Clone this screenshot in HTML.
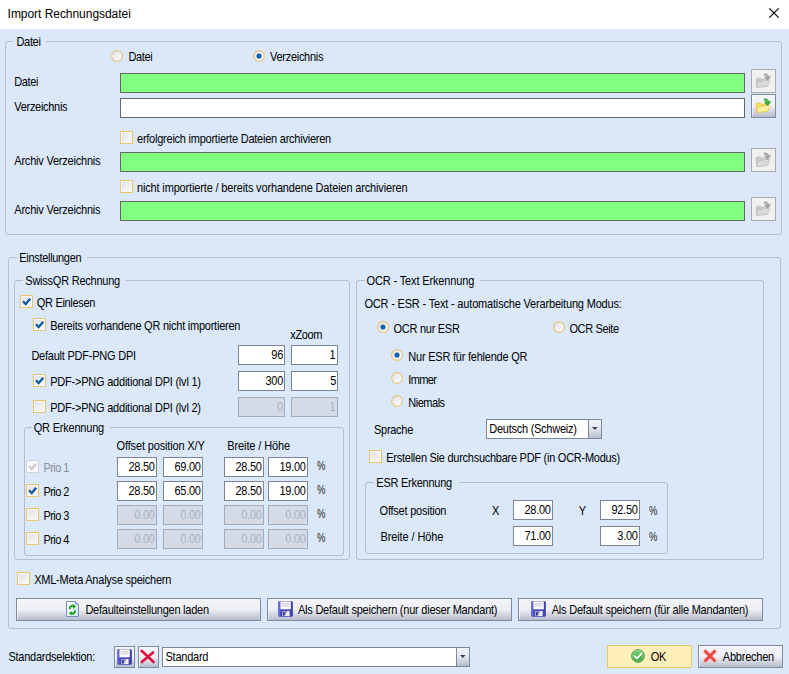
<!DOCTYPE html>
<html><head><meta charset="utf-8"><title>Import Rechnungsdatei</title>
<style>
*{box-sizing:border-box;margin:0;padding:0}
html,body{width:789px;height:674px;overflow:hidden;background:#fff}
body{position:relative;font-family:"Liberation Sans",sans-serif;font-size:11px;color:#000}
.a{position:absolute}
#bg{left:0;top:29px;width:789px;height:645px;background:#dae8fa}
.t{position:absolute;white-space:nowrap;line-height:14px;transform:scaleY(1.13);transform-origin:0 11px}
.gb{position:absolute;border:1px solid #b9bec6;border-radius:3px}
.gl{position:absolute;background:#dae8fa;height:4px}
.in{position:absolute;height:20px;background:#fff;border:1px solid #666}
.n{border-color:#7b8597}
.g{background:#80ff80}
.dis{background:#d5dbe6;border-color:#a4abb9}
.cb{position:absolute;width:13px;height:13px;border:1px solid #e9c56c;background:linear-gradient(135deg,#dfe0e5,#eeeef1 50%,#f9f9fb);box-shadow:inset 0 0 0 1px rgba(246,248,253,.9)}
.cb.gr{border-color:#d2d2d2;background:#fbfbfb}
.btn{position:absolute;border:1px solid #7f8a9f;border-radius:0;background:linear-gradient(#f3f4f8 0%,#edeff4 50%,#b6bdcc 100%);box-shadow:inset 1px 1px 0 rgba(255,255,255,.5)}
.bd{position:absolute;border:1px solid #adaaa7;background:#f0f0f0}
</style></head><body>
<div class="a" id="bg"></div>
<svg class="a" width="0" height="0"><defs><linearGradient id="rg" x1="0" y1="0" x2="1" y2="1"><stop offset="0" stop-color="#d9dae0"/><stop offset="0.5" stop-color="#f0f0f3"/><stop offset="1" stop-color="#ffffff"/></linearGradient></defs></svg>
<svg class="a" style="left:768px;top:7px" width="12" height="12" viewBox="0 0 12 12"><path d="M1.3 1.3 L10.7 10.7 M10.7 1.3 L1.3 10.7" stroke="#000" stroke-width="1.15" fill="none"/></svg>
<div class="gb" style="left:5px;top:41px;width:777px;height:194px"></div>
<div class="gl" style="left:13px;top:40px;width:33px"></div>
<svg class="a" style="left:111px;top:49.5px" width="12" height="12" viewBox="0 0 12 12"><circle cx="6" cy="6" r="5.4" fill="url(#rg)" stroke="#e8c67c" stroke-width="1.2"/></svg>
<svg class="a" style="left:253px;top:49.5px" width="12" height="12" viewBox="0 0 12 12"><circle cx="6" cy="6" r="5.4" fill="url(#rg)" stroke="#e8c67c" stroke-width="1.2"/><circle cx="6" cy="6" r="2.55" fill="#1060b0"/></svg>
<div class="in g" style="left:120px;top:73px;width:625px"></div>
<div class="in " style="left:120px;top:98px;width:625px"></div>
<div class="cb" style="left:120px;top:131px"></div>
<div class="in g" style="left:120px;top:152px;width:625px"></div>
<div class="cb" style="left:120px;top:180px"></div>
<div class="in g" style="left:120px;top:201px;width:625px"></div>
<div class="bd" style="left:751px;top:69px;width:25px;height:24px"></div>
<div class="btn" style="left:751px;top:94px;width:25px;height:24px;border-radius:0"></div>
<div class="bd" style="left:751px;top:148px;width:25px;height:24px"></div>
<div class="bd" style="left:751px;top:197px;width:25px;height:24px"></div>
<div class="gb" style="left:8px;top:257px;width:773px;height:372px"></div>
<div class="gl" style="left:17px;top:256px;width:70px"></div>
<div class="gb" style="left:14px;top:280px;width:336px;height:280px"></div>
<div class="gl" style="left:23px;top:279px;width:103px"></div>
<div class="cb" style="left:20px;top:295px"></div>
<svg class="a" style="left:20px;top:295px" width="13" height="13" viewBox="0 0 13 13"><path d="M3 6.2 L5.7 9 L10.2 3.7" stroke="#0f57a6" stroke-width="2.2" fill="none"/></svg>
<div class="cb" style="left:33px;top:318px"></div>
<svg class="a" style="left:33px;top:318px" width="13" height="13" viewBox="0 0 13 13"><path d="M3 6.2 L5.7 9 L10.2 3.7" stroke="#0f57a6" stroke-width="2.2" fill="none"/></svg>
<div class="in n" style="left:238px;top:345px;width:47px"></div>
<div class="in n" style="left:291px;top:345px;width:47px"></div>
<div class="cb" style="left:33px;top:374px"></div>
<svg class="a" style="left:33px;top:374px" width="13" height="13" viewBox="0 0 13 13"><path d="M3 6.2 L5.7 9 L10.2 3.7" stroke="#0f57a6" stroke-width="2.2" fill="none"/></svg>
<div class="in n" style="left:238px;top:371px;width:47px"></div>
<div class="in n" style="left:291px;top:371px;width:47px"></div>
<div class="cb" style="left:33px;top:400px"></div>
<div class="in n dis" style="left:238px;top:397px;width:47px"></div>
<div class="in n dis" style="left:291px;top:397px;width:47px"></div>
<div class="gb" style="left:24px;top:427px;width:320px;height:129px"></div>
<div class="gl" style="left:32px;top:426px;width:78px"></div>
<div class="cb gr" style="left:26px;top:460px"></div>
<svg class="a" style="left:26px;top:460px" width="13" height="13" viewBox="0 0 13 13"><path d="M3 6.2 L5.7 9 L10.2 3.7" stroke="#c9c9c9" stroke-width="2.2" fill="none"/></svg>
<div class="in n" style="left:117px;top:457px;width:40px"></div>
<div class="in n" style="left:163px;top:457px;width:40px"></div>
<div class="in n" style="left:224px;top:457px;width:40px"></div>
<div class="in n" style="left:268px;top:457px;width:40px"></div>
<div class="cb" style="left:26px;top:484px"></div>
<svg class="a" style="left:26px;top:484px" width="13" height="13" viewBox="0 0 13 13"><path d="M3 6.2 L5.7 9 L10.2 3.7" stroke="#0f57a6" stroke-width="2.2" fill="none"/></svg>
<div class="in n" style="left:117px;top:481px;width:40px"></div>
<div class="in n" style="left:163px;top:481px;width:40px"></div>
<div class="in n" style="left:224px;top:481px;width:40px"></div>
<div class="in n" style="left:268px;top:481px;width:40px"></div>
<div class="cb" style="left:26px;top:508px"></div>
<div class="in n dis" style="left:117px;top:505px;width:40px"></div>
<div class="in n dis" style="left:163px;top:505px;width:40px"></div>
<div class="in n dis" style="left:224px;top:505px;width:40px"></div>
<div class="in n dis" style="left:268px;top:505px;width:40px"></div>
<div class="cb" style="left:26px;top:532px"></div>
<div class="in n dis" style="left:117px;top:529px;width:40px"></div>
<div class="in n dis" style="left:163px;top:529px;width:40px"></div>
<div class="in n dis" style="left:224px;top:529px;width:40px"></div>
<div class="in n dis" style="left:268px;top:529px;width:40px"></div>
<div class="gb" style="left:356px;top:280px;width:408px;height:280px"></div>
<div class="gl" style="left:365px;top:279px;width:115px"></div>
<svg class="a" style="left:377px;top:321px" width="12" height="12" viewBox="0 0 12 12"><circle cx="6" cy="6" r="5.4" fill="url(#rg)" stroke="#e8c67c" stroke-width="1.2"/><circle cx="6" cy="6" r="2.55" fill="#1060b0"/></svg>
<svg class="a" style="left:553px;top:321px" width="12" height="12" viewBox="0 0 12 12"><circle cx="6" cy="6" r="5.4" fill="url(#rg)" stroke="#e8c67c" stroke-width="1.2"/></svg>
<svg class="a" style="left:391px;top:349px" width="12" height="12" viewBox="0 0 12 12"><circle cx="6" cy="6" r="5.4" fill="url(#rg)" stroke="#e8c67c" stroke-width="1.2"/><circle cx="6" cy="6" r="2.55" fill="#1060b0"/></svg>
<svg class="a" style="left:391px;top:372px" width="12" height="12" viewBox="0 0 12 12"><circle cx="6" cy="6" r="5.4" fill="url(#rg)" stroke="#e8c67c" stroke-width="1.2"/></svg>
<svg class="a" style="left:391px;top:395px" width="12" height="12" viewBox="0 0 12 12"><circle cx="6" cy="6" r="5.4" fill="url(#rg)" stroke="#e8c67c" stroke-width="1.2"/></svg>
<div class="in" style="left:486px;top:419px;width:116px;border-color:#7d8799"></div>
<div class="a" style="left:588px;top:420px;width:13px;height:18px;border-left:1px solid #7d8799;background:linear-gradient(#f1f3f8,#e6e9f1 45%,#b4bccd)"></div>
<svg class="a" style="left:592px;top:427px" width="6" height="3" viewBox="0 0 6 3"><path d="M0 0 L5.6 0 L2.8 3 Z" fill="#34405c"/></svg>
<div class="cb" style="left:369px;top:450px"></div>
<div class="gb" style="left:365px;top:482px;width:303px;height:72px"></div>
<div class="gl" style="left:374px;top:481px;width:85px"></div>
<div class="in n" style="left:513px;top:500px;width:40px"></div>
<div class="in n" style="left:600px;top:500px;width:40px"></div>
<div class="in n" style="left:513px;top:526px;width:40px"></div>
<div class="in n" style="left:600px;top:526px;width:40px"></div>
<div class="cb" style="left:17px;top:572px"></div>
<div class="btn" style="left:16px;top:598px;width:245px;height:23px"></div>
<div class="btn" style="left:267px;top:598px;width:245px;height:23px"></div>
<div class="btn" style="left:518px;top:598px;width:245px;height:23px"></div>
<div class="btn" style="left:114px;top:646px;width:21px;height:22px;border-radius:0"></div>
<div class="btn" style="left:138px;top:646px;width:21px;height:22px;border-radius:0"></div>
<div class="in" style="left:162px;top:647px;width:308px;border-color:#7d8799"></div>
<div class="a" style="left:456px;top:648px;width:13px;height:18px;border-left:1px solid #7d8799;background:linear-gradient(#f1f3f8,#e6e9f1 45%,#b4bccd)"></div>
<svg class="a" style="left:460px;top:655px" width="6" height="3" viewBox="0 0 6 3"><path d="M0 0 L5.6 0 L2.8 3 Z" fill="#34405c"/></svg>
<div class="a" style="left:607px;top:645px;width:85px;height:23px;border:1px solid #e8c66c;background:#ffefbb;border-radius:1px"></div>
<div class="btn" style="left:698px;top:645px;width:85px;height:23px"></div>
<svg class="a" style="left:755px;top:73px" width="17" height="16" viewBox="0 0 17 16">
<defs><linearGradient id="f73a" x1="0" y1="0" x2="1" y2="1"><stop offset="0" stop-color="#e4e4e4"/><stop offset="1" stop-color="#cfcfcf"/></linearGradient>
<linearGradient id="f73b" x1="0" y1="0" x2="0" y2="1"><stop offset="0" stop-color="#b5b5b5"/><stop offset="1" stop-color="#9a9a9a"/></linearGradient></defs>
<path d="M0.8 6.2 L1.6 5.2 L5.2 4.8 L6.4 6 L11.6 6.2 L12.4 7.2 L12.2 13.2 L1.6 14.6 Z" fill="#c9c9c9" stroke="#c0c0c0" stroke-width="0.6"/>
<path d="M1.6 14.6 L3.6 9.2 L8 8.8 L9 7.6 L15 7.2 L12.6 13.4 Z" fill="url(#f73a)" stroke="#c0c0c0" stroke-width="0.6"/>
<path d="M9.2 0.8 C12.2 0.6 13.6 1.8 13.8 3.8 L15.8 3.6 L12.8 7.4 L9.4 4.4 L11.4 4.2 C11.2 3.2 10.6 2.8 9.2 2.6 Z" fill="url(#f73b)" stroke="#9a9a9a" stroke-width="0.5"/>
</svg>
<svg class="a" style="left:755px;top:98px" width="17" height="16" viewBox="0 0 17 16">
<defs><linearGradient id="f98a" x1="0" y1="0" x2="1" y2="1"><stop offset="0" stop-color="#fffcd6"/><stop offset="1" stop-color="#f8e878"/></linearGradient>
<linearGradient id="f98b" x1="0" y1="0" x2="0" y2="1"><stop offset="0" stop-color="#5fd24f"/><stop offset="1" stop-color="#1f9a1f"/></linearGradient></defs>
<path d="M0.8 6.2 L1.6 5.2 L5.2 4.8 L6.4 6 L11.6 6.2 L12.4 7.2 L12.2 13.2 L1.6 14.6 Z" fill="#f2dc62" stroke="#e0bf3c" stroke-width="0.6"/>
<path d="M1.6 14.6 L3.6 9.2 L8 8.8 L9 7.6 L15 7.2 L12.6 13.4 Z" fill="url(#f98a)" stroke="#e0bf3c" stroke-width="0.6"/>
<path d="M9.2 0.8 C12.2 0.6 13.6 1.8 13.8 3.8 L15.8 3.6 L12.8 7.4 L9.4 4.4 L11.4 4.2 C11.2 3.2 10.6 2.8 9.2 2.6 Z" fill="url(#f98b)" stroke="#188418" stroke-width="0.5"/>
</svg>
<svg class="a" style="left:755px;top:152px" width="17" height="16" viewBox="0 0 17 16">
<defs><linearGradient id="f152a" x1="0" y1="0" x2="1" y2="1"><stop offset="0" stop-color="#e4e4e4"/><stop offset="1" stop-color="#cfcfcf"/></linearGradient>
<linearGradient id="f152b" x1="0" y1="0" x2="0" y2="1"><stop offset="0" stop-color="#b5b5b5"/><stop offset="1" stop-color="#9a9a9a"/></linearGradient></defs>
<path d="M0.8 6.2 L1.6 5.2 L5.2 4.8 L6.4 6 L11.6 6.2 L12.4 7.2 L12.2 13.2 L1.6 14.6 Z" fill="#c9c9c9" stroke="#c0c0c0" stroke-width="0.6"/>
<path d="M1.6 14.6 L3.6 9.2 L8 8.8 L9 7.6 L15 7.2 L12.6 13.4 Z" fill="url(#f152a)" stroke="#c0c0c0" stroke-width="0.6"/>
<path d="M9.2 0.8 C12.2 0.6 13.6 1.8 13.8 3.8 L15.8 3.6 L12.8 7.4 L9.4 4.4 L11.4 4.2 C11.2 3.2 10.6 2.8 9.2 2.6 Z" fill="url(#f152b)" stroke="#9a9a9a" stroke-width="0.5"/>
</svg>
<svg class="a" style="left:755px;top:201px" width="17" height="16" viewBox="0 0 17 16">
<defs><linearGradient id="f201a" x1="0" y1="0" x2="1" y2="1"><stop offset="0" stop-color="#e4e4e4"/><stop offset="1" stop-color="#cfcfcf"/></linearGradient>
<linearGradient id="f201b" x1="0" y1="0" x2="0" y2="1"><stop offset="0" stop-color="#b5b5b5"/><stop offset="1" stop-color="#9a9a9a"/></linearGradient></defs>
<path d="M0.8 6.2 L1.6 5.2 L5.2 4.8 L6.4 6 L11.6 6.2 L12.4 7.2 L12.2 13.2 L1.6 14.6 Z" fill="#c9c9c9" stroke="#c0c0c0" stroke-width="0.6"/>
<path d="M1.6 14.6 L3.6 9.2 L8 8.8 L9 7.6 L15 7.2 L12.6 13.4 Z" fill="url(#f201a)" stroke="#c0c0c0" stroke-width="0.6"/>
<path d="M9.2 0.8 C12.2 0.6 13.6 1.8 13.8 3.8 L15.8 3.6 L12.8 7.4 L9.4 4.4 L11.4 4.2 C11.2 3.2 10.6 2.8 9.2 2.6 Z" fill="url(#f201b)" stroke="#9a9a9a" stroke-width="0.5"/>
</svg>
<svg class="a" style="left:278px;top:601px" width="15" height="16" viewBox="0 0 15 16">
<rect x="0.3" y="0.3" width="14.4" height="15.4" rx="1.2" fill="#4a4ab8"/>
<rect x="0.3" y="0.8" width="1.8" height="14.4" fill="#6a6ad8"/>
<rect x="12.6" y="0.8" width="2.1" height="14.4" fill="#4343ad"/>
<rect x="2.4" y="0.5" width="10.4" height="7.8" fill="#fafafa"/>
<rect x="3.6" y="2" width="8" height="1" fill="#d4d4d4"/><rect x="3.6" y="3.6" width="8" height="1" fill="#d0d0d0"/><rect x="3.6" y="5.2" width="8" height="0.8" fill="#e0e0e0"/>
<rect x="4.2" y="10" width="7.4" height="5" fill="#eeeeee"/>
<path d="M4.2 10 L9.4 10 L7 15 L4.2 15 Z" fill="#9a9ab8"/>
<rect x="5" y="11" width="1.7" height="3.3" fill="#3838a8"/>
</svg>
<svg class="a" style="left:531px;top:601px" width="15" height="16" viewBox="0 0 15 16">
<rect x="0.3" y="0.3" width="14.4" height="15.4" rx="1.2" fill="#4a4ab8"/>
<rect x="0.3" y="0.8" width="1.8" height="14.4" fill="#6a6ad8"/>
<rect x="12.6" y="0.8" width="2.1" height="14.4" fill="#4343ad"/>
<rect x="2.4" y="0.5" width="10.4" height="7.8" fill="#fafafa"/>
<rect x="3.6" y="2" width="8" height="1" fill="#d4d4d4"/><rect x="3.6" y="3.6" width="8" height="1" fill="#d0d0d0"/><rect x="3.6" y="5.2" width="8" height="0.8" fill="#e0e0e0"/>
<rect x="4.2" y="10" width="7.4" height="5" fill="#eeeeee"/>
<path d="M4.2 10 L9.4 10 L7 15 L4.2 15 Z" fill="#9a9ab8"/>
<rect x="5" y="11" width="1.7" height="3.3" fill="#3838a8"/>
</svg>
<svg class="a" style="left:117px;top:649px" width="15" height="16" viewBox="0 0 15 16">
<rect x="0.3" y="0.3" width="14.4" height="15.4" rx="1.2" fill="#4a4ab8"/>
<rect x="0.3" y="0.8" width="1.8" height="14.4" fill="#6a6ad8"/>
<rect x="12.6" y="0.8" width="2.1" height="14.4" fill="#4343ad"/>
<rect x="2.4" y="0.5" width="10.4" height="7.8" fill="#fafafa"/>
<rect x="3.6" y="2" width="8" height="1" fill="#d4d4d4"/><rect x="3.6" y="3.6" width="8" height="1" fill="#d0d0d0"/><rect x="3.6" y="5.2" width="8" height="0.8" fill="#e0e0e0"/>
<rect x="4.2" y="10" width="7.4" height="5" fill="#eeeeee"/>
<path d="M4.2 10 L9.4 10 L7 15 L4.2 15 Z" fill="#9a9ab8"/>
<rect x="5" y="11" width="1.7" height="3.3" fill="#3838a8"/>
</svg>
<svg class="a" style="left:66px;top:601px" width="13" height="16" viewBox="0 0 13 16">
<defs><linearGradient id="pg" x1="0" y1="0" x2="1" y2="1"><stop offset="0" stop-color="#ffffff"/><stop offset="1" stop-color="#cfe6fb"/></linearGradient></defs>
<path d="M0.5 0.5 L9.5 0.5 L12.5 3.5 L12.5 15.5 L0.5 15.5 Z" fill="url(#pg)" stroke="#7f89c2" stroke-width="1"/>
<path d="M9.5 0.5 L9.5 3.5 L12.5 3.5 Z" fill="#7fb4ee" stroke="#8a93c6" stroke-width="0.6"/>
<path d="M3.9 8.2 C3.5 5.6 5 4.7 7.4 4.9" stroke="#1aa11a" stroke-width="2" fill="none"/>
<path d="M7 3 L10 5.4 L7 7.9 Z" fill="#1aa11a"/>
<path d="M8.9 9.3 C9.3 11.9 7.8 12.8 5.4 12.6" stroke="#1aa11a" stroke-width="2" fill="none"/>
<path d="M5.8 9.9 L2.8 12.2 L5.8 14.6 Z" fill="#1aa11a"/>
</svg>
<svg class="a" style="left:138px;top:646px" width="21" height="22" viewBox="0 0 21 22">
<path d="M3.6 4.8 L15.6 16" stroke="#de1040" stroke-width="2.6" stroke-linecap="round" fill="none"/>
<path d="M15 6.4 L3.8 16" stroke="#de1040" stroke-width="2.6" stroke-linecap="round" fill="none"/></svg>
<svg class="a" style="left:631px;top:648.6px" width="14" height="14" viewBox="0 0 14 14">
<defs><linearGradient id="okg" x1="0" y1="0" x2="0" y2="1"><stop offset="0" stop-color="#8fd48a"/><stop offset="0.5" stop-color="#4eb14a"/><stop offset="1" stop-color="#3a9a38"/></linearGradient></defs>
<circle cx="7" cy="7" r="6.4" fill="url(#okg)" stroke="#3d9a3d" stroke-width="0.9"/>
<circle cx="7" cy="7" r="5.4" fill="none" stroke="#b7e3b3" stroke-width="0.7" opacity="0.8"/>
<path d="M3.8 7.2 L6 9.4 L10.2 4.8" stroke="#fff" stroke-width="1.9" fill="none" stroke-linecap="round" stroke-linejoin="round"/></svg>
<svg class="a" style="left:703px;top:649px" width="14" height="14" viewBox="0 0 14 14">
<path d="M2.4 2.4 L11.6 11.6 M11.6 2.4 L2.4 11.6" stroke="#f6a3a3" stroke-width="4" stroke-linecap="round" fill="none"/>
<path d="M2.4 2.4 L11.6 11.6 M11.6 2.4 L2.4 11.6" stroke="#ee4545" stroke-width="2.6" stroke-linecap="round" fill="none"/></svg>
<div class="t" style="left:7.60px;top:7px;letter-spacing:-0.042px;font-size:12px;transform:none">Import Rechnungsdatei</div>
<div class="t" style="left:16.50px;top:35px;letter-spacing:-0.338px">Datei</div>
<div class="t" style="left:128.40px;top:50px;letter-spacing:-0.338px">Datei</div>
<div class="t" style="left:270.10px;top:50px;letter-spacing:-0.297px">Verzeichnis</div>
<div class="t" style="left:14.30px;top:75px;letter-spacing:-0.398px">Datei</div>
<div class="t" style="left:14.30px;top:100px;letter-spacing:-0.297px">Verzeichnis</div>
<div class="t" style="left:137.00px;top:132px;letter-spacing:-0.238px">erfolgreich importierte Dateien archivieren</div>
<div class="t" style="left:14.30px;top:154px;letter-spacing:-0.215px">Archiv Verzeichnis</div>
<div class="t" style="left:137.00px;top:181px;letter-spacing:-0.156px">nicht importierte / bereits vorhandene Dateien archivieren</div>
<div class="t" style="left:14.30px;top:203px;letter-spacing:-0.215px">Archiv Verzeichnis</div>
<div class="t" style="left:19.30px;top:251px;letter-spacing:-0.312px">Einstellungen</div>
<div class="t" style="left:25.30px;top:274px;letter-spacing:-0.234px">SwissQR Rechnung</div>
<div class="t" style="left:36.80px;top:296px;letter-spacing:-0.324px">QR Einlesen</div>
<div class="t" style="left:50.20px;top:319px;letter-spacing:-0.239px">Bereits vorhandene QR nicht importieren</div>
<div class="t" style="left:290.30px;top:328px;letter-spacing:-0.385px">xZoom</div>
<div class="t" style="left:31.40px;top:349px;letter-spacing:-0.227px">Default PDF-PNG DPI</div>
<div class="t" style="left:50.20px;top:375px;letter-spacing:-0.220px">PDF-&gt;PNG additional DPI (lvl 1)</div>
<div class="t" style="left:50.20px;top:401px;letter-spacing:-0.220px">PDF-&gt;PNG additional DPI (lvl 2)</div>
<div class="t" style="left:271.29px;top:348px;letter-spacing:-0.240px">96</div>
<div class="t" style="left:329.38px;top:348px;letter-spacing:-0.240px">1</div>
<div class="t" style="left:265.42px;top:374px;letter-spacing:-0.240px">300</div>
<div class="t" style="left:330.18px;top:374px;letter-spacing:-0.240px">5</div>
<div class="t" style="left:276.88px;top:400px;letter-spacing:-0.240px;color:#a9b1c2">0</div>
<div class="t" style="left:329.38px;top:400px;letter-spacing:-0.240px;color:#a9b1c2">1</div>
<div class="t" style="left:33.70px;top:421px;letter-spacing:-0.205px">QR Erkennung</div>
<div class="t" style="left:116.60px;top:439px;letter-spacing:-0.153px">Offset position X/Y</div>
<div class="t" style="left:227.30px;top:439px;letter-spacing:-0.116px">Breite / Höhe</div>
<div class="t" style="left:43.40px;top:461px;letter-spacing:-0.558px;color:#8c8c98">Prio 1</div>
<div class="t" style="left:128.43px;top:460px;letter-spacing:-0.240px">28.50</div>
<div class="t" style="left:174.43px;top:460px;letter-spacing:-0.240px">69.00</div>
<div class="t" style="left:235.43px;top:460px;letter-spacing:-0.240px">28.50</div>
<div class="t" style="left:279.43px;top:460px;letter-spacing:-0.240px">19.00</div>
<div class="t" style="left:316.60px;top:458.7px;letter-spacing:-0.240px;color:#222;transform:scale(0.86,1.13)">%</div>
<div class="t" style="left:43.40px;top:485px;letter-spacing:-0.558px">Prio 2</div>
<div class="t" style="left:128.43px;top:484px;letter-spacing:-0.240px">28.50</div>
<div class="t" style="left:174.43px;top:484px;letter-spacing:-0.240px">65.00</div>
<div class="t" style="left:235.43px;top:484px;letter-spacing:-0.240px">28.50</div>
<div class="t" style="left:279.43px;top:484px;letter-spacing:-0.240px">19.00</div>
<div class="t" style="left:316.60px;top:482.7px;letter-spacing:-0.240px;color:#222;transform:scale(0.86,1.13)">%</div>
<div class="t" style="left:43.40px;top:509px;letter-spacing:-0.558px">Prio 3</div>
<div class="t" style="left:134.30px;top:508px;letter-spacing:-0.240px;color:#a9b1c2">0.00</div>
<div class="t" style="left:180.30px;top:508px;letter-spacing:-0.240px;color:#a9b1c2">0.00</div>
<div class="t" style="left:241.30px;top:508px;letter-spacing:-0.240px;color:#a9b1c2">0.00</div>
<div class="t" style="left:285.30px;top:508px;letter-spacing:-0.240px;color:#a9b1c2">0.00</div>
<div class="t" style="left:316.60px;top:506.70000000000005px;letter-spacing:-0.240px;color:#222;transform:scale(0.86,1.13)">%</div>
<div class="t" style="left:43.40px;top:533px;letter-spacing:-0.558px">Prio 4</div>
<div class="t" style="left:134.30px;top:532px;letter-spacing:-0.240px;color:#a9b1c2">0.00</div>
<div class="t" style="left:180.30px;top:532px;letter-spacing:-0.240px;color:#a9b1c2">0.00</div>
<div class="t" style="left:241.30px;top:532px;letter-spacing:-0.240px;color:#a9b1c2">0.00</div>
<div class="t" style="left:285.30px;top:532px;letter-spacing:-0.240px;color:#a9b1c2">0.00</div>
<div class="t" style="left:316.60px;top:530.7px;letter-spacing:-0.240px;color:#222;transform:scale(0.86,1.13)">%</div>
<div class="t" style="left:366.50px;top:274px;letter-spacing:-0.138px">OCR - Text Erkennung</div>
<div class="t" style="left:364.40px;top:297px;letter-spacing:-0.178px">OCR - ESR - Text - automatische Verarbeitung Modus:</div>
<div class="t" style="left:393.60px;top:322px;letter-spacing:-0.280px">OCR nur ESR</div>
<div class="t" style="left:569.40px;top:322px;letter-spacing:-0.353px">OCR Seite</div>
<div class="t" style="left:408.30px;top:350px;letter-spacing:-0.223px">Nur ESR für fehlende QR</div>
<div class="t" style="left:408.30px;top:373px;letter-spacing:-0.634px">Immer</div>
<div class="t" style="left:408.30px;top:396px;letter-spacing:-0.491px">Niemals</div>
<div class="t" style="left:374.00px;top:423px;letter-spacing:-0.283px">Sprache</div>
<div class="t" style="left:489.30px;top:422px;letter-spacing:-0.259px">Deutsch (Schweiz)</div>
<div class="t" style="left:386.30px;top:451px;letter-spacing:-0.262px">Erstellen Sie durchsuchbare PDF (in OCR-Modus)</div>
<div class="t" style="left:376.30px;top:476px;letter-spacing:-0.253px">ESR Erkennung</div>
<div class="t" style="left:379.60px;top:504px;letter-spacing:-0.235px">Offset position</div>
<div class="t" style="left:492.00px;top:504px;letter-spacing:-0.344px">X</div>
<div class="t" style="left:578.80px;top:504px;letter-spacing:0.256px">Y</div>
<div class="t" style="left:524.43px;top:503px;letter-spacing:-0.240px">28.00</div>
<div class="t" style="left:611.43px;top:503px;letter-spacing:-0.240px">92.50</div>
<div class="t" style="left:648.80px;top:504.4px;letter-spacing:-0.240px;color:#222;transform:scale(0.86,1.13)">%</div>
<div class="t" style="left:380.40px;top:530px;letter-spacing:-0.093px">Breite / Höhe</div>
<div class="t" style="left:524.43px;top:529px;letter-spacing:-0.240px">71.00</div>
<div class="t" style="left:617.30px;top:529px;letter-spacing:-0.240px">3.00</div>
<div class="t" style="left:648.80px;top:530.4px;letter-spacing:-0.240px;color:#222;transform:scale(0.86,1.13)">%</div>
<div class="t" style="left:34.20px;top:573px;letter-spacing:-0.234px">XML-Meta Analyse speichern</div>
<div class="t" style="left:85.40px;top:603px;letter-spacing:-0.240px">Defaulteinstellungen laden</div>
<div class="t" style="left:298.00px;top:603px;letter-spacing:-0.234px">Als Default speichern (nur dieser Mandant)</div>
<div class="t" style="left:551.70px;top:603px;letter-spacing:-0.211px">Als Default speichern (für alle Mandanten)</div>
<div class="t" style="left:8.40px;top:650px;letter-spacing:-0.251px">Standardselektion:</div>
<div class="t" style="left:165.50px;top:650px;letter-spacing:-0.240px">Standard</div>
<div class="t" style="left:650.70px;top:650px;letter-spacing:-0.353px">OK</div>
<div class="t" style="left:722.80px;top:650px;letter-spacing:-0.224px">Abbrechen</div>
</body></html>
